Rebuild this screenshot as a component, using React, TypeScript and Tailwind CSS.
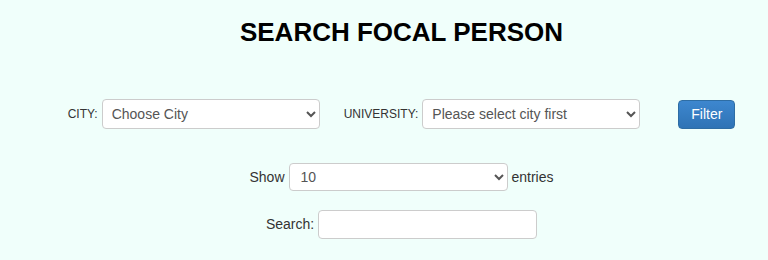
export default function App() {
    const font = { fontFamily: '"Liberation Sans", Arial, sans-serif' };

    return (
        <div className="min-h-[260px] w-full bg-[#f0fffb] pl-[35px] text-[#333]" style={font}>
            <div className="pt-[17px] text-center text-[26px] leading-[30px] font-bold text-black">
                SEARCH FOCAL PERSON
            </div>

            <div className="mt-[52px] flex items-center justify-center">
                <label className="text-[12px] mr-[4px]">CITY:</label>
                <select className="h-[30px] w-[218px] rounded border border-[#ccc] bg-white pl-[5px] text-[14px] text-[#555]">
                    <option>Choose City</option>
                </select>
                <label className="ml-[24px] mr-[4px] text-[12px]">UNIVERSITY:</label>
                <select className="h-[30px] w-[218px] rounded border border-[#ccc] bg-white pl-[5px] text-[14px] text-[#555]">
                    <option>Please select city first</option>
                </select>
                <button className="ml-[38px] h-[29px] w-[57px] rounded border border-[#2e6da4] bg-gradient-to-b from-[#3d87cf] to-[#2f73b5] text-[14px] text-white">
                    Filter
                </button>
            </div>

            <div className="mt-[34px] flex items-center justify-center text-[14px]">
                <span className="mr-[4px]">Show</span>
                <select className="h-[28px] w-[219px] rounded border border-[#ccc] bg-white pl-[7px] text-[14px] text-[#555]">
                    <option>10</option>
                    <option>25</option>
                    <option>50</option>
                    <option>100</option>
                </select>
                <span className="ml-[4px]">entries</span>
            </div>

            <div className="mt-[19px] flex items-center justify-center text-[14px]">
                <label className="mr-[4px]">Search:</label>
                <input type="text" className="h-[29px] w-[219px] rounded border border-[#ccc] bg-white px-2 outline-none" />
            </div>
        </div>
    );
}
